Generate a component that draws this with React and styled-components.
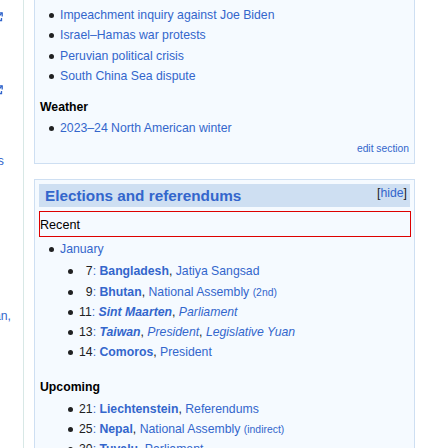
import React from "react";
import styled, { createGlobalStyle } from "styled-components";

const Global = createGlobalStyle`
  html, body {
    margin: 0;
    padding: 0;
    background: #ffffff;
    font-family: "Liberation Sans", Arial, sans-serif;
    color: #202122;
    overflow: hidden;
  }
`;

const Page = styled.div`
  display: flex;
  align-items: flex-start;
  width: 448px;
  height: 448px;
  overflow: hidden;
`;

const Side = styled.div`
  width: 23px;
  height: 448px;
  border-right: 1px solid #d8e8e6;
  overflow: hidden;
  flex-shrink: 0;
  display: flex;
  flex-direction: column;
`;

const SideRow = styled.div`
  display: flex;
  justify-content: flex-end;
  white-space: nowrap;
  margin-top: ${(p) => p.top}px;
  padding-right: ${(p) => p.pad}px;
  height: ${(p) => p.h || 20}px;
  line-height: 20px;
  font-size: 12.25px;
  color: #3366cc;
`;

const Main = styled.div`
  margin-left: 10px;
  width: 381px;
  flex-shrink: 0;
`;

const Box = styled.div`
  box-sizing: border-box;
  background: #f5faff;
  border: 1px solid #cedff2;
  border-top: ${(p) => (p.cut ? "none" : "1px solid #cedff2")};
  padding: ${(p) => (p.cut ? "6px 5px 7px 5px" : "4px")};
  margin-top: ${(p) => p.gap || 0}px;
  font-size: 12.25px;
`;

const List = styled.ul`
  list-style: none;
  margin: ${(p) => p.mt || 0}px 0 0 0;
  padding: 0 0 0 ${(p) => p.indent || 20}px;
`;

const Item = styled.li`
  position: relative;
  line-height: 19.6px;
  margin-bottom: 0.7px;
  &::before {
    content: "";
    position: absolute;
    left: -11px;
    top: 7px;
    width: 5px;
    height: 5px;
    border-radius: 50%;
    background: #202122;
  }
`;

const Link = styled.span`
  color: #3366cc;
  font-weight: ${(p) => (p.bold ? "bold" : "normal")};
  font-style: ${(p) => (p.italic ? "italic" : "normal")};
  font-size: ${(p) => (p.small ? "10.4px" : "inherit")};
`;

const Hidden = styled.span`
  visibility: hidden;
`;

const SubHead = styled.div`
  font-weight: bold;
  line-height: 20px;
  padding-top: ${(p) => p.top || 0}px;
  padding-left: ${(p) => p.left || 0}px;
  color: #000000;
`;

const EditLink = styled.div`
  text-align: right;
  font-size: 10.3px;
  line-height: 14px;
  margin-top: 3px;
  color: #3366cc;
`;

const Band = styled.div`
  display: flex;
  justify-content: space-between;
  align-items: flex-start;
  height: 23px;
  background: #cedff2;
  padding: 0 3px 0 6px;
`;

const BandTitle = styled.h2`
  margin: 0;
  font-size: 15.3px;
  line-height: 23px;
  font-weight: bold;
  color: #3366cc;
`;

const Toggle = styled.span`
  font-size: 12.25px;
  line-height: 18px;
  color: #202122;
`;

const Tab = styled.div`
  box-sizing: border-box;
  margin-top: 4px;
  margin-right: -1px;
  height: 26px;
  border: 1px solid #dd0000;
  padding-top: 3px;
  line-height: 20px;
  font-size: 12.6px;
  color: #000000;
`;

const ExtIcon = () => (
  <svg width="10" height="10" viewBox="0 0 10 10" style={{ flexShrink: 0 }}>
    <path d="M4 1.5H1.5v7h7V6" fill="none" stroke="#3366cc" strokeWidth="1.3" />
    <path d="M5.5 0.8h3.7v3.7" fill="none" stroke="#3366cc" strokeWidth="1.3" />
    <path d="M9 1L4.5 5.5" stroke="#3366cc" strokeWidth="1.3" />
  </svg>
);

const Day = ({ n }) => (
  <>
    {n < 10 && <Hidden>0</Hidden>}
    {n}
    <Link>:</Link>{" "}
  </>
);

export default function App() {
  return (
    <Page>
      <Global />
      <Side>
        <SideRow top={12} pad={20} h={10}>
          <ExtIcon />
        </SideRow>
        <SideRow top={63} pad={20} h={10}>
          <ExtIcon />
        </SideRow>
        <SideRow top={56} pad={19}>
          Sports
        </SideRow>
        <SideRow top={135} pad={12}>
          Kiribati, Taiwan,
        </SideRow>
      </Side>
      <Main>
        <Box cut>
          <List>
            <Item><Link>Impeachment inquiry against Joe Biden</Link></Item>
            <Item><Link>Israel–Hamas war protests</Link></Item>
            <Item><Link>Peruvian political crisis</Link></Item>
            <Item><Link>South China Sea dispute</Link></Item>
          </List>
          <SubHead top={10}>Weather</SubHead>
          <List mt={2}>
            <Item><Link>2023–24 North American winter</Link></Item>
          </List>
          <EditLink>edit section</EditLink>
        </Box>
        <Box gap={15}>
          <Band>
            <BandTitle>Elections and referendums</BandTitle>
            <Toggle>
              [<Link>hide</Link>]
            </Toggle>
          </Band>
          <Tab>Recent</Tab>
          <List mt={3} indent={21}>
            <Item>
              <Link>January</Link>
              <List mt={3} indent={19}>
                <Item>
                  <Day n={7} />
                  <Link bold>Bangladesh</Link>, <Link>Jatiya Sangsad</Link>
                </Item>
                <Item>
                  <Day n={9} />
                  <Link bold>Bhutan</Link>, <Link>National Assembly</Link>{" "}
                  <Link small>(2nd)</Link>
                </Item>
                <Item>
                  <Day n={11} />
                  <Link bold italic>Sint Maarten</Link>, <Link italic>Parliament</Link>
                </Item>
                <Item>
                  <Day n={13} />
                  <Link bold italic>Taiwan</Link>, <Link italic>President</Link>,{" "}
                  <Link italic>Legislative Yuan</Link>
                </Item>
                <Item>
                  <Day n={14} />
                  <Link bold>Comoros</Link>, <Link>President</Link>
                </Item>
              </List>
            </Item>
          </List>
          <SubHead top={13} left={1}>Upcoming</SubHead>
          <List mt={3} indent={40}>
            <Item>
              <Day n={21} />
              <Link bold>Liechtenstein</Link>, <Link>Referendums</Link>
            </Item>
            <Item>
              <Day n={25} />
              <Link bold>Nepal</Link>, <Link>National Assembly</Link>{" "}
              <Link small>(indirect)</Link>
            </Item>
            <Item>
              <Day n={30} />
              <Link bold>Tuvalu</Link>, <Link>Parliament</Link>
            </Item>
          </List>
        </Box>
      </Main>
    </Page>
  );
}
